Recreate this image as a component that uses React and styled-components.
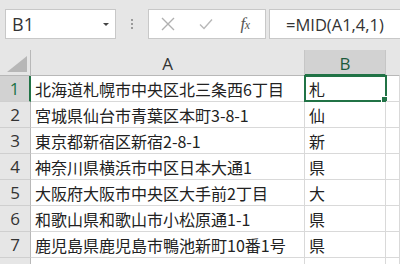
import React from "react";
import styled, { createGlobalStyle } from "styled-components";

const Global = createGlobalStyle`
  html, body { margin: 0; padding: 0; background: #e6e6e6; }
  body { width: 400px; height: 264px; overflow: hidden; }
`;

const Page = styled.div`
  width: 400px;
  height: 264px;
  overflow: hidden;
  background: #e6e6e6;
  display: flex;
  flex-direction: column;
`;

const Toolbar = styled.div`
  height: 50px;
  flex: none;
  display: flex;
  align-items: flex-start;
  padding: 9px 0 0 5px;
  box-sizing: border-box;
`;

const Box = styled.div`
  height: 30px;
  box-sizing: border-box;
  background: #fff;
  border: 1px solid #c8c8c8;
  display: flex;
  align-items: center;
`;

const NameBox = styled(Box)`
  width: 111px;
  padding: 0 0 0 6px;
  justify-content: space-between;
  font-family: "Open Sans", "Liberation Sans", sans-serif;
  font-size: 18px;
  color: #333;
`;

const Caret = styled.span`
  width: 0;
  height: 0;
  border-left: 3px solid transparent;
  border-right: 3px solid transparent;
  border-top: 3px solid #444;
  margin-right: 6px;
`;

const Dots = styled.div`
  width: 32px;
  height: 30px;
  display: flex;
  flex-direction: column;
  align-items: center;
  justify-content: center;
  gap: 2px;
  & > i {
    width: 2px;
    height: 2px;
    background: #9a9a9a;
    display: block;
  }
`;

const FxBox = styled(Box)`
  width: 118px;
`;

const FxBtn = styled.span`
  width: ${(p) => p.$w || 40}px;
  display: flex;
  justify-content: center;
  align-items: center;
`;

const FxText = styled.span`
  font-family: "Liberation Serif", "DejaVu Serif", serif;
  font-style: italic;
  font-size: 17px;
  color: #555;
  letter-spacing: -0.5px;
  & sub { font-size: 12px; vertical-align: baseline; }
`;

const Formula = styled(Box)`
  flex: 1;
  margin-left: 3px;
  border-right: none;
  padding-left: 16px;
  font-family: "Open Sans", "Liberation Sans", sans-serif;
  font-size: 16.5px;
  color: #333;
`;

const Grid = styled.div`
  display: grid;
  grid-template-columns: 31px 274px 81px 1fr;
  grid-auto-rows: 26px;
  background: #fff;
  font-family: "Noto Sans CJK JP", sans-serif;
`;

const Corner = styled.div`
  background: #e6e6e6;
  border-right: 1px solid #b8b8b8;
  border-bottom: 1px solid #b8b8b8;
  position: relative;
  &::after {
    content: "";
    position: absolute;
    right: 3px;
    bottom: 3px;
    width: 0;
    height: 0;
    border-left: 20px solid transparent;
    border-bottom: 16px solid #b7b7b7;
  }
`;

const ColHead = styled.div`
  background: ${(p) => (p.$sel ? "#d2d2d2" : "#e6e6e6")};
  border-right: 1px solid ${(p) => (p.$last ? "transparent" : "#c6c6c6")};
  border-bottom: ${(p) => (p.$sel ? "2px solid #217346" : "1px solid #b8b8b8")};
  display: flex;
  align-items: center;
  justify-content: center;
  font-family: "Open Sans", "Liberation Sans", sans-serif;
  font-size: 17px;
  color: ${(p) => (p.$sel ? "#1c5a3a" : "#333")};
  padding-top: 2px;
  box-sizing: border-box;
`;

const RowHead = styled.div`
  background: ${(p) => (p.$sel ? "#d2d2d2" : "#e6e6e6")};
  border-right: ${(p) => (p.$sel ? "2px solid #217346" : "1px solid #b8b8b8")};
  border-bottom: 1px solid #cfcfcf;
  display: flex;
  align-items: center;
  justify-content: center;
  font-family: "Open Sans", "Liberation Sans", sans-serif;
  font-size: 17px;
  color: ${(p) => (p.$sel ? "#217346" : "#333")};
  box-sizing: border-box;
`;

const Cell = styled.div`
  border-right: 1px solid #d9d9d9;
  border-bottom: 1px solid #d9d9d9;
  display: flex;
  align-items: center;
  padding-left: 4px;
  font-size: 16px;
  color: #222;
  white-space: nowrap;
  overflow: hidden;
  box-sizing: border-box;
  position: relative;
`;

const SelCell = styled(Cell)`
  border: 2px solid #217346;
  margin: -1px -1px 0 -1px;
  padding-left: 3px;
  overflow: visible;
`;

const Handle = styled.span`
  position: absolute;
  right: -3px;
  bottom: -3px;
  width: 5px;
  height: 5px;
  background: #217346;
  border: 1px solid #fff;
`;

const rows = [
  ["北海道札幌市中央区北三条西6丁目", "札"],
  ["宮城県仙台市青葉区本町3-8-1", "仙"],
  ["東京都新宿区新宿2-8-1", "新"],
  ["神奈川県横浜市中区日本大通1", "県"],
  ["大阪府大阪市中央区大手前2丁目", "大"],
  ["和歌山県和歌山市小松原通1-1", "県"],
  ["鹿児島県鹿児島市鴨池新町10番1号", "県"],
  ["", ""],
];

export default function App() {
  return (
    <Page>
      <Global />
      <Toolbar>
        <NameBox>
          <span>B1</span>
          <Caret />
        </NameBox>
        <Dots>
          <i />
          <i />
          <i />
        </Dots>
        <FxBox>
          <FxBtn $w={40}>
            <svg width="14" height="14" viewBox="0 0 14 14">
              <path d="M1 1 L13 13 M13 1 L1 13" stroke="#b0b0b0" strokeWidth="1.4" fill="none" />
            </svg>
          </FxBtn>
          <FxBtn $w={40}>
            <svg width="14" height="12" viewBox="0 0 14 12">
              <path d="M1 6.5 L5 10.5 L13 1.5" stroke="#b8b8b8" strokeWidth="1.4" fill="none" />
            </svg>
          </FxBtn>
          <FxBtn $w={42}>
            <FxText>
              f<sub>x</sub>
            </FxText>
          </FxBtn>
        </FxBox>
        <Formula>=MID(A1,4,1)</Formula>
      </Toolbar>
      <Grid>
        <Corner />
        <ColHead>A</ColHead>
        <ColHead $sel>B</ColHead>
        <ColHead $last />
        {rows.map(([a, b], i) => (
          <React.Fragment key={i}>
            <RowHead $sel={i === 0}>{i < 7 ? i + 1 : ""}</RowHead>
            <Cell>{a}</Cell>
            {i === 0 ? (
              <SelCell>
                {b}
                <Handle />
              </SelCell>
            ) : (
              <Cell>{b}</Cell>
            )}
            <Cell />
          </React.Fragment>
        ))}
      </Grid>
    </Page>
  );
}
